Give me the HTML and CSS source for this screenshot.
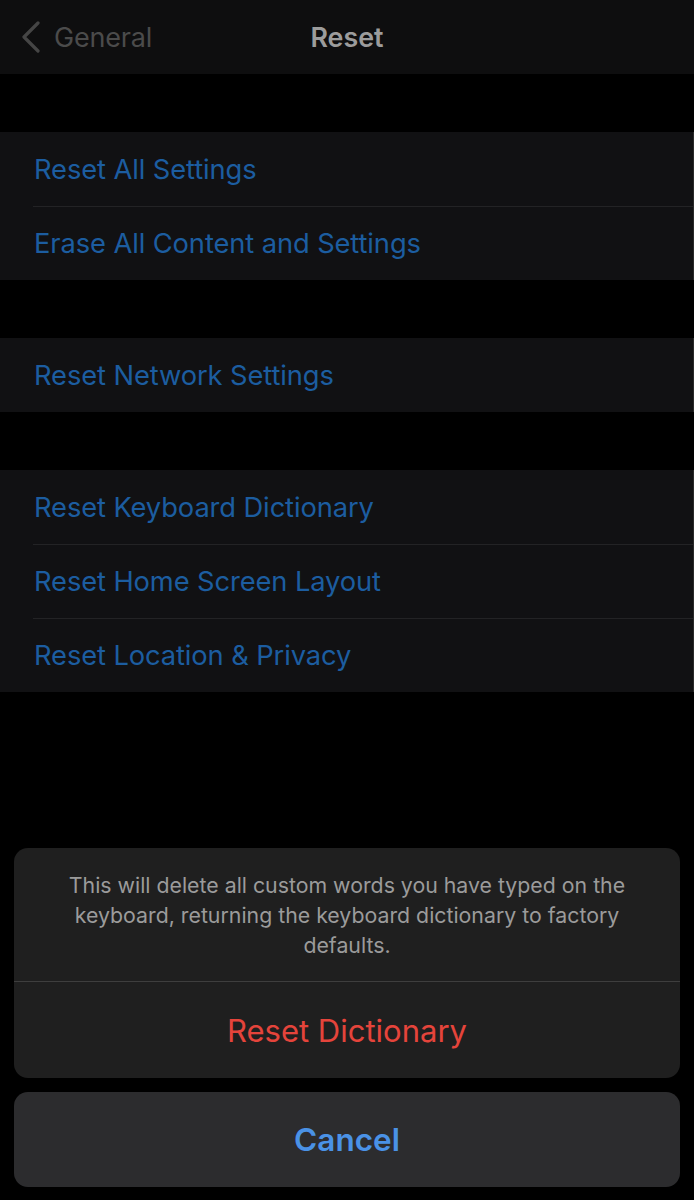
FILE: index.html
```html
<!DOCTYPE html>
<html>
<head>
<meta charset="utf-8">
<link rel="stylesheet" href="styles.css">
</head>
<body>
<div class="screen">
  <header class="navbar">
    <div class="back">
      <svg class="chev" width="20" height="32" viewBox="0 0 20 32"><path d="M17 2 L3 16 L17 30" fill="none" stroke="#454545" stroke-width="3.2" stroke-linecap="round" stroke-linejoin="round"/></svg>
      <span class="back-label">General</span>
    </div>
    <div class="title">Reset</div>
  </header>

  <section class="group">
    <div class="row">Reset All Settings</div>
    <div class="row">Erase All Content and Settings</div>
  </section>

  <section class="group">
    <div class="row">Reset Network Settings</div>
  </section>

  <section class="group">
    <div class="row">Reset Keyboard Dictionary</div>
    <div class="row">Reset Home Screen Layout</div>
    <div class="row">Reset Location &amp; Privacy</div>
  </section>

  <div class="overlay">
    <div class="sheet">
      <p class="message">This will delete all custom words you have typed on the keyboard, returning the keyboard dictionary to factory defaults.</p>
      <div class="action destructive">Reset Dictionary</div>
    </div>
    <div class="cancel">Cancel</div>
  </div>
</div>
</body>
</html>
```

FILE: styles.css
```css
* { box-sizing: border-box; }
html, body {
  margin: 0;
  padding: 0;
  background: #000;
  font-family: Inter, "Noto Sans", "Liberation Sans", sans-serif;
}
.screen {
  width: 694px;
  height: 1200px;
  background: #000;
  display: flex;
  flex-direction: column;
  gap: 58px;
  overflow: hidden;
}
.navbar {
  height: 74px;
  background: #0e0e0f;
  display: flex;
  align-items: center;
  position: relative;
  flex-shrink: 0;
}
.back {
  display: flex;
  align-items: center;
  padding-left: 21px;
  gap: 13px;
}
.chev { display: block; }
.back-label {
  font-size: 27px;
  color: #4b4b4b;
  letter-spacing: -0.2px;
}
.title {
  position: absolute;
  left: 0;
  right: 0;
  text-align: center;
  font-size: 26.8px;
  font-weight: 600;
  color: #9c9c9c;
  pointer-events: none;
}
.group {
  background: #111113;
  border-right: 1px solid #2a2a2a;
  flex-shrink: 0;
}
.row {
  height: 74px;
  margin-left: 33px;
  display: flex;
  align-items: center;
  padding-left: 1px;
  font-size: 27.3px;
  color: #1c5da0;
  letter-spacing: -0.1px;
  border-top: 1px solid #232325;
}
.row:first-child { border-top: none; }
.overlay {
  position: absolute;
  left: 14px;
  right: 14px;
  top: 848px;
  display: flex;
  flex-direction: column;
  gap: 14px;
}
.sheet {
  background: #1f1f1f;
  border-radius: 14px;
  overflow: hidden;
}
.message {
  margin: 0;
  padding: 22px 48px 21px;
  text-align: center;
  font-size: 21.3px;
  line-height: 30px;
  color: #9b9b9b;
  border-bottom: 1px solid #3e3e3e;
}
.action {
  height: 96px;
  display: flex;
  align-items: center;
  justify-content: center;
  font-size: 31px;
}
.destructive { color: #e5443b; }
.cancel {
  height: 95px;
  background: #2c2c2e;
  border-radius: 14px;
  display: flex;
  align-items: center;
  justify-content: center;
  font-size: 31.5px;
  font-weight: 600;
  color: #4a92e6;
}
```
